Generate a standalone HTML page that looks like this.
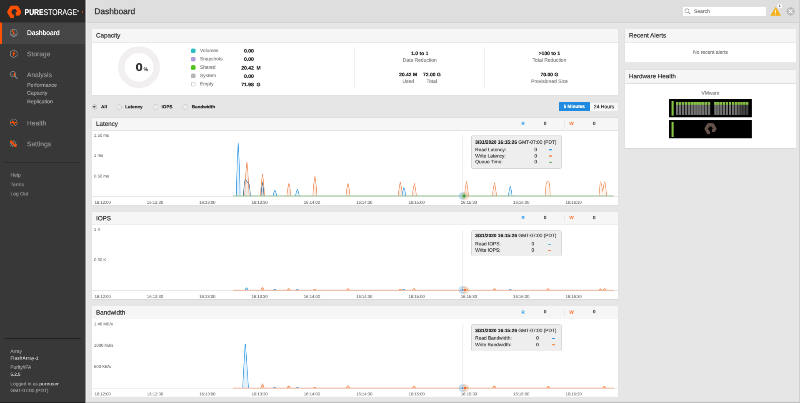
<!DOCTYPE html>
<html lang="en"><head><meta charset="utf-8"><title>Pure Storage - Dashboard</title>
<style>
html,body{margin:0;padding:0;background:#e6e6e6;overflow:hidden;}
body{width:800px;height:403px;position:relative;font-family:"Liberation Sans",sans-serif;}
#stage{position:absolute;left:0;top:0;width:1920px;height:968px;transform:scale(0.4166667);transform-origin:0 0;background:#e6e6e6;overflow:hidden;will-change:transform;}
.t{position:absolute;white-space:nowrap;text-rendering:geometricPrecision;-webkit-text-stroke:0.2px currentColor;text-shadow:0 0 1.2px currentColor;}
.panel{position:absolute;background:#fff;border:1px solid #d4d4d4;box-sizing:border-box;}
.ph{position:absolute;left:0;top:0;right:0;background:#f6f6f6;border-bottom:1px solid #dcdcdc;box-sizing:border-box;}
svg{position:absolute;left:0;top:0;overflow:visible;}
</style></head><body><div id="stage">

<div style="position:absolute;left:0;top:0;width:1920px;height:53px;background:#dedede;border-bottom:2px solid #d3d3d3;"></div>
<div class="t" style="left:226.6px;top:15.3px;font-size:20px;line-height:26px;color:#3f3f3f;font-weight:normal;-webkit-text-stroke:0.45px #3f3f3f;">Dashboard</div>
<div style="position:absolute;left:1639.2px;top:16.3px;width:199.2px;height:21.8px;background:#fff;border-radius:2px;"></div>
<div class="t" style="left:1665.6px;top:19.1px;font-size:12px;line-height:16px;color:#8c8c8c;font-weight:normal;">Search</div>
<svg width="1920" height="60" viewBox="0 0 800 25"><circle cx="687" cy="10.8" r="2.0" fill="none" stroke="#8a8a8a" stroke-width="0.65"/><line x1="688.5" y1="12.3" x2="690.2" y2="14" stroke="#8a8a8a" stroke-width="0.75"/><path d="M775.7 7.6 L780.4 15.3 L771 15.3 Z" fill="#f6b21b" stroke="#f6b21b" stroke-width="0.8" stroke-linejoin="round"/><rect x="775.25" y="9.8" width="0.9" height="3.3" fill="#fff"/><rect x="775.25" y="13.7" width="0.9" height="0.9" fill="#fff"/><circle cx="779.7" cy="6" r="2.4" fill="#fff"/><circle cx="790.6" cy="11.4" r="4.2" fill="#bdbdbd"/><path d="M788.9 9.7 L792.3 13.1 M792.3 9.7 L788.9 13.1" stroke="#fff" stroke-width="0.9" stroke-linecap="round"/></svg>
<div class="t" style="left:1871.3px;top:9.9px;font-size:7px;line-height:9px;color:#555;font-weight:bold;transform:translateX(-50%);-webkit-text-stroke:0.08px currentColor;">1</div>
<div style="position:absolute;left:0;top:0;width:205px;height:968px;background:#383838;"></div><div style="position:absolute;left:205px;top:0;width:4px;height:968px;background:linear-gradient(to right,#9a9a9a 0,#e9e9e9 35%,#ebebeb 70%,rgba(235,235,235,0) 100%);"></div>
<div style="position:absolute;left:0;top:0;width:205px;height:54px;background:#2a2a2a;"></div>
<div style="position:absolute;left:0;top:54px;width:205px;height:52px;background:#454545;"></div>
<div style="position:absolute;left:0;top:54px;width:5px;height:52px;background:#fe5000;"></div>
<svg width="205" height="54" viewBox="0 0 85.4167 22.5"><path d="M13.7 16.45 L11.66 16.45 L9.07 11.95 L11.66 7.46 L16.84 7.46 L19.43 11.95 L18.39 13.75 L15.7 13.75" fill="none" stroke="#fe5000" stroke-width="3.7" stroke-linejoin="round"/><path d="M82.6 10.6 L81.5 12 L82.6 13.4 Z" fill="#fe5000"/></svg>
<div class="t" style="left:59.04px;top:15.32px;font-size:20px;line-height:26px;color:#fff;transform-origin:0 50%;transform:scaleX(0.81);letter-spacing:0.2px;"><b>PURE</b><span style="color:#e8e8e8;font-weight:normal">STORAGE</span><span style="font-size:7px;vertical-align:7px;color:#ccc">&reg;</span></div>
<div class="t" style="left:64.8px;top:69.4px;font-size:16px;line-height:21px;color:#fff;font-weight:normal;">Dashboard</div>
<div class="t" style="left:64.8px;top:119.8px;font-size:16px;line-height:21px;color:#8c8c8c;font-weight:normal;">Storage</div>
<div class="t" style="left:64.8px;top:170.2px;font-size:16px;line-height:21px;color:#8c8c8c;font-weight:normal;">Analysis</div>
<div class="t" style="left:64.8px;top:285.7px;font-size:16px;line-height:21px;color:#8c8c8c;font-weight:normal;">Health</div>
<div class="t" style="left:64.8px;top:335.6px;font-size:16px;line-height:21px;color:#8c8c8c;font-weight:normal;">Settings</div>
<div class="t" style="left:65.0px;top:196.0px;font-size:12.5px;line-height:16px;color:#9c9c9c;font-weight:normal;">Performance</div>
<div class="t" style="left:65.0px;top:215.4px;font-size:12.5px;line-height:16px;color:#9c9c9c;font-weight:normal;">Capacity</div>
<div class="t" style="left:65.0px;top:235.8px;font-size:12.5px;line-height:16px;color:#9c9c9c;font-weight:normal;">Replication</div>
<svg width="24" height="24" viewBox="-12 -12 24 24" style="left:20.880000000000003px;top:67.44px"><circle r="8.6" fill="none" stroke="#878787" stroke-width="1.7"/><path d="M-8.3 1.8 A8.5 8.5 0 0 0 8.3 1.8 Z" fill="#878787" opacity=".5"/><path d="M-3.4 -5.8 L0.7 1.4" stroke="#fe5000" stroke-width="2.9" stroke-linecap="round"/></svg>
<svg width="24" height="24" viewBox="-12 -12 24 24" style="left:20.880000000000003px;top:117.12px"><path d="M0 -9.3 L8 -4.6 L8 4.6 L0 9.3 L-8 4.6 L-8 -4.6 Z" fill="none" stroke="#878787" stroke-width="1.7"/><path d="M1.6 -6 L-2.6 0.9 L0.2 0.9 L-1.4 6 L2.9 -1.1 L0.2 -1.1 Z" fill="#fe5000" stroke="#fe5000" stroke-width="1.2" stroke-linejoin="round"/></svg>
<svg width="24" height="24" viewBox="-12 -12 24 24" style="left:21.119999999999997px;top:168.0px"><circle cx="-1.9" cy="-1.9" r="6.6" fill="none" stroke="#878787" stroke-width="1.7"/><path d="M3.2 3.2 L8.3 8.3" stroke="#878787" stroke-width="2.6" stroke-linecap="round"/><path d="M-4.2 1.6 L-4.2 -2" stroke="#5d7890" stroke-width="2"/><path d="M-1.6 2 L-1.6 -3" stroke="#a05a3a" stroke-width="1.6"/><path d="M1.3 2.4 L1.3 -4.6" stroke="#fe5000" stroke-width="3"/></svg>
<svg width="24" height="24" viewBox="-12 -12 24 24" style="left:20.64px;top:282.24px"><circle r="8.4" fill="none" stroke="#878787" stroke-width="1.4"/><path d="M-8.6 0.3 L-4.2 0.3 L-2 -3.6 L1 4.4 L3.2 0.3 L8.6 0.3" fill="none" stroke="#fe5000" stroke-width="2.6" stroke-linejoin="round"/></svg>
<svg width="24" height="24" viewBox="-12 -12 24 24" style="left:20.4px;top:332.64px"><circle r="6.6" fill="none" stroke="#878787" stroke-width="3.4" stroke-dasharray="2.6 2.58" opacity=".85"/><circle r="4.8" fill="none" stroke="#878787" stroke-width="1.6" opacity=".85"/><path d="M-4.6 -4.6 L4.6 4.6" stroke="#fe5000" stroke-width="4.2" stroke-linecap="butt"/><circle cx="-5" cy="-5" r="3" fill="#fe5000"/><circle cx="5" cy="5" r="3" fill="#fe5000"/></svg>
<div style="position:absolute;left:10.8px;top:389.5px;width:183.6px;height:1.4px;background:#1e1e1e;"></div>
<div class="t" style="left:25.0px;top:412.0px;font-size:12px;line-height:16px;color:#888;font-weight:normal;">Help</div>
<div class="t" style="left:25.0px;top:434.6px;font-size:12px;line-height:16px;color:#888;font-weight:normal;">Terms</div>
<div class="t" style="left:25.0px;top:456.6px;font-size:12px;line-height:16px;color:#888;font-weight:normal;">Log Out</div>
<div style="position:absolute;left:10.8px;top:811.7px;width:183.6px;height:1.4px;background:#1e1e1e;"></div>
<div class="t" style="left:25.0px;top:836.6px;font-size:11.5px;line-height:15px;color:#939393;font-weight:normal;">Array</div>
<div class="t" style="left:25.0px;top:853.4px;font-size:11px;line-height:14px;color:#c4c4c4;font-weight:bold;-webkit-text-stroke:0.08px currentColor;-webkit-text-stroke:0;text-shadow:none;">FlashArray-1</div>
<div class="t" style="left:25.0px;top:875.0px;font-size:11.5px;line-height:15px;color:#939393;font-weight:normal;">Purity//FA</div>
<div class="t" style="left:25.0px;top:892.3px;font-size:11px;line-height:14px;color:#c4c4c4;font-weight:bold;-webkit-text-stroke:0.08px currentColor;-webkit-text-stroke:0;text-shadow:none;">5.2.5</div>
<div class="t" style="left:25.0px;top:914.6px;font-size:11.5px;line-height:15px;color:#939393;font-weight:normal;">Logged in as <b style="color:#c4c4c4;font-size:11px;-webkit-text-stroke:0;text-shadow:none">pureuser</b></div>
<div class="t" style="left:25.0px;top:930.7px;font-size:11.5px;line-height:15px;color:#939393;font-weight:normal;">GMT-07:00 (PDT)</div>
<div class="panel" style="left:220px;top:69px;width:1264px;height:161px;"><div class="ph" style="height:33px"></div></div>
<div class="t" style="left:230.5px;top:76.0px;font-size:15px;line-height:20px;color:#444;font-weight:normal;">Capacity</div>
<svg width="1920" height="968" viewBox="0 0 1920 968"><circle cx="333.6" cy="161.4" r="42.3" fill="none" stroke="#f1efef" stroke-width="15.6"/><line x1="850.8" y1="112.08" x2="850.8" y2="211.2" stroke="#efefef" stroke-width="2"/><line x1="1163.04" y1="112.08" x2="1163.04" y2="211.2" stroke="#efefef" stroke-width="2"/></svg>
<div class="t" style="left:334.1px;top:144.3px;font-size:26px;line-height:34px;color:#333;font-weight:bold;transform:translateX(-50%);-webkit-text-stroke:0.08px currentColor;transform:translateX(-50%) scaleX(1.17);">0</div>
<div class="t" style="left:344.4px;top:157.6px;font-size:12px;line-height:16px;color:#666;font-weight:bold;-webkit-text-stroke:0.08px currentColor;">%</div>
<svg width="1920" height="968" viewBox="0 0 800 403.333"><rect x="191" y="48.50" width="4.6" height="4.6" rx="1.5" fill="#2fbdc6"/></svg>
<div class="t" style="left:480.0px;top:115.1px;font-size:11.5px;line-height:15px;color:#939393;font-weight:normal;">Volumes</div>
<div class="t" style="left:609.1px;top:114.4px;font-size:12px;line-height:16px;color:#333;font-weight:bold;transform:translateX(-100%);-webkit-text-stroke:0.08px currentColor;">0.00</div>
<svg width="1920" height="968" viewBox="0 0 800 403.333"><rect x="191" y="56.85" width="4.6" height="4.6" rx="1.5" fill="#b39ddb"/></svg>
<div class="t" style="left:480.0px;top:135.2px;font-size:11.5px;line-height:15px;color:#939393;font-weight:normal;">Snapshots</div>
<div class="t" style="left:609.1px;top:134.4px;font-size:12px;line-height:16px;color:#333;font-weight:bold;transform:translateX(-100%);-webkit-text-stroke:0.08px currentColor;">0.00</div>
<svg width="1920" height="968" viewBox="0 0 800 403.333"><rect x="191" y="65.20" width="4.6" height="4.6" rx="1.5" fill="#4ec41b"/></svg>
<div class="t" style="left:480.0px;top:155.2px;font-size:11.5px;line-height:15px;color:#939393;font-weight:normal;">Shared</div>
<div class="t" style="left:609.1px;top:154.5px;font-size:12px;line-height:16px;color:#333;font-weight:bold;transform:translateX(-100%);-webkit-text-stroke:0.08px currentColor;">20.42</div>
<div class="t" style="left:615.4px;top:154.5px;font-size:12px;line-height:16px;color:#333;font-weight:bold;-webkit-text-stroke:0.08px currentColor;">M</div>
<svg width="1920" height="968" viewBox="0 0 800 403.333"><rect x="191" y="73.55" width="4.6" height="4.6" rx="1.5" fill="#b4b8bb"/></svg>
<div class="t" style="left:480.0px;top:175.3px;font-size:11.5px;line-height:15px;color:#939393;font-weight:normal;">System</div>
<div class="t" style="left:609.1px;top:174.5px;font-size:12px;line-height:16px;color:#333;font-weight:bold;transform:translateX(-100%);-webkit-text-stroke:0.08px currentColor;">0.00</div>
<svg width="1920" height="968" viewBox="0 0 800 403.333"><rect x="191.35" y="82.25" width="3.8999999999999995" height="3.8999999999999995" rx="1.5" fill="#fff" stroke="#c9c9c9" stroke-width="0.7"/></svg>
<div class="t" style="left:480.0px;top:195.3px;font-size:11.5px;line-height:15px;color:#939393;font-weight:normal;">Empty</div>
<div class="t" style="left:609.1px;top:194.6px;font-size:12px;line-height:16px;color:#333;font-weight:bold;transform:translateX(-100%);-webkit-text-stroke:0.08px currentColor;">71.98</div>
<div class="t" style="left:615.4px;top:194.6px;font-size:12px;line-height:16px;color:#333;font-weight:bold;-webkit-text-stroke:0.08px currentColor;">G</div>
<div class="t" style="left:1007.5px;top:120.4px;font-size:12px;line-height:16px;color:#333;font-weight:bold;transform:translateX(-50%);-webkit-text-stroke:0.08px currentColor;">1.0 to 1</div>
<div class="t" style="left:1007.5px;top:137.2px;font-size:11.8px;line-height:15px;color:#939393;font-weight:normal;transform:translateX(-50%);">Data Reduction</div>
<div class="t" style="left:979.4px;top:171.3px;font-size:12px;line-height:16px;color:#333;font-weight:bold;transform:translateX(-50%);-webkit-text-stroke:0.08px currentColor;">20.42 M</div>
<div class="t" style="left:1036.6px;top:171.3px;font-size:12px;line-height:16px;color:#333;font-weight:bold;transform:translateX(-50%);-webkit-text-stroke:0.08px currentColor;">72.00 G</div>
<div class="t" style="left:979.7px;top:188.1px;font-size:11.8px;line-height:15px;color:#939393;font-weight:normal;transform:translateX(-50%);">Used</div>
<div class="t" style="left:1036.3px;top:188.1px;font-size:11.8px;line-height:15px;color:#939393;font-weight:normal;transform:translateX(-50%);">Total</div>
<div class="t" style="left:1318.6px;top:120.4px;font-size:12px;line-height:16px;color:#333;font-weight:bold;transform:translateX(-50%);-webkit-text-stroke:0.08px currentColor;">&gt;100 to 1</div>
<div class="t" style="left:1318.6px;top:137.2px;font-size:11.8px;line-height:15px;color:#939393;font-weight:normal;transform:translateX(-50%);">Total Reduction</div>
<div class="t" style="left:1318.6px;top:170.8px;font-size:12px;line-height:16px;color:#333;font-weight:bold;transform:translateX(-50%);-webkit-text-stroke:0.08px currentColor;">70.00 G</div>
<div class="t" style="left:1318.6px;top:188.1px;font-size:11.8px;line-height:15px;color:#939393;font-weight:normal;transform:translateX(-50%);">Provisioned Size</div>
<div class="panel" style="left:1499px;top:69px;width:412px;height:82px;"><div class="ph" style="height:33px"></div></div>
<div class="t" style="left:1509.5px;top:76.0px;font-size:15px;line-height:20px;color:#444;font-weight:normal;">Recent Alerts</div>
<div class="t" style="left:1705.2px;top:117.8px;font-size:11.8px;line-height:15px;color:#8c8c8c;font-weight:normal;transform:translateX(-50%);">No recent alerts</div>
<div class="panel" style="left:1499px;top:167px;width:412px;height:190px;"><div class="ph" style="height:33px"></div></div>
<div class="t" style="left:1509.5px;top:174.0px;font-size:15px;line-height:20px;color:#444;font-weight:normal;">Hardware Health</div>
<div class="t" style="left:1705.2px;top:215.5px;font-size:11.8px;line-height:15px;color:#8c8c8c;font-weight:normal;transform:translateX(-50%);">VMware</div>
<svg width="1920" height="968" viewBox="0 0 800 403.333"><rect x="669.1" y="98.9" width="82.6" height="18.4" fill="#000"/><rect x="669.1" y="120" width="82.6" height="18.4" fill="#000"/><rect x="671.5" y="100.9" width="2.1" height="14.7" fill="#86c440"/><rect x="671.5" y="121.7" width="2.1" height="15.3" fill="#86c440"/><rect x="676.10" y="102" width="2.34" height="13" fill="#727272"/><rect x="676.10" y="102" width="2.34" height="2.7" fill="#86c440"/><rect x="678.99" y="102" width="2.34" height="13" fill="#727272"/><rect x="678.99" y="102" width="2.34" height="2.7" fill="#86c440"/><rect x="681.88" y="102" width="2.34" height="13" fill="#727272"/><rect x="681.88" y="102" width="2.34" height="2.7" fill="#86c440"/><rect x="684.77" y="102" width="2.34" height="13" fill="#727272"/><rect x="684.77" y="102" width="2.34" height="2.7" fill="#86c440"/><rect x="687.67" y="102" width="2.34" height="13" fill="#727272"/><rect x="687.67" y="102" width="2.34" height="2.7" fill="#86c440"/><rect x="690.56" y="102" width="2.34" height="13" fill="#727272"/><rect x="690.56" y="102" width="2.34" height="2.7" fill="#86c440"/><rect x="693.45" y="102" width="2.34" height="13" fill="#727272"/><rect x="693.45" y="102" width="2.34" height="2.7" fill="#86c440"/><rect x="696.34" y="102" width="2.34" height="13" fill="#727272"/><rect x="696.34" y="102" width="2.34" height="2.7" fill="#86c440"/><rect x="699.23" y="102" width="2.34" height="13" fill="#727272"/><rect x="699.23" y="102" width="2.34" height="2.7" fill="#86c440"/><rect x="702.12" y="102" width="2.34" height="13" fill="#727272"/><rect x="702.12" y="102" width="2.34" height="2.7" fill="#86c440"/><rect x="705.02" y="102" width="2.34" height="13" fill="#727272"/><rect x="705.02" y="102" width="2.34" height="2.7" fill="#86c440"/><rect x="707.91" y="102" width="2.34" height="13" fill="#727272"/><rect x="707.91" y="102" width="2.34" height="2.7" fill="#86c440"/><rect x="714.30" y="102" width="2.34" height="13" fill="#727272"/><rect x="714.30" y="102" width="2.34" height="2.7" fill="#86c440"/><rect x="717.19" y="102" width="2.34" height="13" fill="#727272"/><rect x="717.19" y="102" width="2.34" height="2.7" fill="#86c440"/><rect x="720.08" y="102" width="2.34" height="13" fill="#727272"/><rect x="720.08" y="102" width="2.34" height="2.7" fill="#86c440"/><rect x="722.97" y="102" width="2.34" height="13" fill="#727272"/><rect x="722.97" y="102" width="2.34" height="2.7" fill="#86c440"/><rect x="725.87" y="102" width="2.34" height="13" fill="#727272"/><rect x="725.87" y="102" width="2.34" height="2.7" fill="#86c440"/><rect x="728.76" y="102" width="2.34" height="13" fill="#727272"/><rect x="728.76" y="102" width="2.34" height="2.7" fill="#86c440"/><rect x="731.65" y="102" width="2.34" height="13" fill="#727272"/><rect x="731.65" y="102" width="2.34" height="2.7" fill="#86c440"/><rect x="734.54" y="102" width="2.34" height="13" fill="#727272"/><rect x="734.54" y="102" width="2.34" height="2.7" fill="#86c440"/><rect x="737.43" y="102" width="2.34" height="13" fill="#5c5c5c"/><rect x="737.43" y="102" width="2.34" height="2.7" fill="#86c440"/><rect x="740.32" y="102" width="2.34" height="13" fill="#4a4a4a"/><rect x="740.32" y="102" width="2.34" height="2.7" fill="#86c440"/><rect x="743.22" y="102" width="2.34" height="13" fill="#444"/><rect x="743.22" y="102" width="2.34" height="2.7" fill="#86c440"/><rect x="746.11" y="102" width="2.34" height="13" fill="#404040"/><rect x="746.11" y="102" width="2.34" height="2.7" fill="#86c440"/><path d="M709.9 132.64 L708.29 132.64 L706.07 128.8 L708.29 124.96 L712.72 124.96 L714.93 128.8 L714.05 130.33 L711.7 130.33" fill="none" stroke="#66514a" stroke-width="3.3" stroke-linejoin="round"/></svg>
<div style="position:absolute;left:220.8px;top:250.3px;width:12.5px;height:12.5px;border:1.3px solid #bcbcbc;border-radius:50%;background:#d9d9d9;box-sizing:border-box;"><div style="position:absolute;left:2.6px;top:2.6px;width:4.6px;height:4.6px;border-radius:50%;background:#3a3a3a"></div></div>
<div class="t" style="left:242.6px;top:249.6px;font-size:11px;line-height:14px;color:#333;font-weight:bold;-webkit-text-stroke:0.08px currentColor;">All</div>
<div style="position:absolute;left:279.6px;top:250.3px;width:12.5px;height:12.5px;border:1.3px solid #bcbcbc;border-radius:50%;background:#ececec;box-sizing:border-box;"></div>
<div class="t" style="left:300.6px;top:249.6px;font-size:11px;line-height:14px;color:#333;font-weight:bold;-webkit-text-stroke:0.08px currentColor;">Latency</div>
<div style="position:absolute;left:367.0px;top:250.3px;width:12.5px;height:12.5px;border:1.3px solid #bcbcbc;border-radius:50%;background:#ececec;box-sizing:border-box;"></div>
<div class="t" style="left:387.6px;top:249.6px;font-size:11px;line-height:14px;color:#333;font-weight:bold;-webkit-text-stroke:0.08px currentColor;">IOPS</div>
<div style="position:absolute;left:438.0px;top:250.3px;width:12.5px;height:12.5px;border:1.3px solid #bcbcbc;border-radius:50%;background:#ececec;box-sizing:border-box;"></div>
<div class="t" style="left:460.2px;top:249.6px;font-size:11px;line-height:14px;color:#333;font-weight:bold;-webkit-text-stroke:0.08px currentColor;">Bandwidth</div>
<div style="position:absolute;left:1341.0px;top:244.8px;width:74.8px;height:22.2px;background:#1f8ae0;border-radius:3px 0 0 3px;"></div>
<div style="position:absolute;left:1415.8px;top:244.8px;width:67.9px;height:22.2px;background:#f8f8f8;border-radius:0 3px 3px 0;border:1px solid #dcdcdc;border-left:none;box-sizing:border-box;"></div>
<div class="t" style="left:1378.3px;top:248.8px;font-size:11px;line-height:14px;color:#fff;font-weight:bold;transform:translateX(-50%);-webkit-text-stroke:0.08px currentColor;">5 Minutes</div>
<div class="t" style="left:1449.6px;top:247.8px;font-size:12px;line-height:16px;color:#444;font-weight:normal;transform:translateX(-50%);">24 Hours</div>
<div class="panel" style="left:220px;top:281.5px;width:1264px;height:211.5px;"><div class="ph" style="height:31px"></div></div>
<div class="t" style="left:230.5px;top:287.5px;font-size:15px;line-height:20px;color:#444;font-weight:normal;">Latency</div>
<div class="t" style="left:1255.2px;top:290.0px;font-size:11px;line-height:14px;color:#46a8ee;font-weight:bold;transform:translateX(-50%);-webkit-text-stroke:0.08px currentColor;-webkit-text-stroke:0;">R</div>
<div class="t" style="left:1308.5px;top:289.5px;font-size:11.5px;line-height:15px;color:#5a5a5a;font-weight:bold;transform:translateX(-50%);-webkit-text-stroke:0.08px currentColor;-webkit-text-stroke:0;">0</div>
<div style="position:absolute;left:1354.3px;top:288.4px;width:1.0px;height:17.3px;background:#e4e4e4;"></div>
<div class="t" style="left:1371.8px;top:290.0px;font-size:11px;line-height:14px;color:#f2814a;font-weight:bold;transform:translateX(-50%);-webkit-text-stroke:0.08px currentColor;-webkit-text-stroke:0;">W</div>
<div class="t" style="left:1426.3px;top:289.5px;font-size:11.5px;line-height:15px;color:#5a5a5a;font-weight:bold;transform:translateX(-50%);-webkit-text-stroke:0.08px currentColor;-webkit-text-stroke:0;">0</div>
<div class="t" style="left:225.8px;top:318.7px;font-size:10px;line-height:13px;color:#858585;font-weight:normal;-webkit-text-stroke:0;">1.50 ms</div>
<div class="t" style="left:225.8px;top:367.4px;font-size:10px;line-height:13px;color:#858585;font-weight:normal;-webkit-text-stroke:0;">1 ms</div>
<div class="t" style="left:225.8px;top:416.6px;font-size:10px;line-height:13px;color:#858585;font-weight:normal;-webkit-text-stroke:0;">0.50 ms</div>
<div class="t" style="left:227.0px;top:479.5px;font-size:10px;line-height:13px;color:#858585;font-weight:normal;-webkit-text-stroke:0;">16:12:00</div>
<div class="t" style="left:352.6px;top:479.5px;font-size:10px;line-height:13px;color:#858585;font-weight:normal;-webkit-text-stroke:0;">16:12:30</div>
<div class="t" style="left:478.2px;top:479.5px;font-size:10px;line-height:13px;color:#858585;font-weight:normal;-webkit-text-stroke:0;">16:13:00</div>
<div class="t" style="left:603.7px;top:479.5px;font-size:10px;line-height:13px;color:#858585;font-weight:normal;-webkit-text-stroke:0;">16:13:30</div>
<div class="t" style="left:729.3px;top:479.5px;font-size:10px;line-height:13px;color:#858585;font-weight:normal;-webkit-text-stroke:0;">16:14:00</div>
<div class="t" style="left:854.9px;top:479.5px;font-size:10px;line-height:13px;color:#858585;font-weight:normal;-webkit-text-stroke:0;">16:14:30</div>
<div class="t" style="left:980.4px;top:479.5px;font-size:10px;line-height:13px;color:#858585;font-weight:normal;-webkit-text-stroke:0;">16:15:00</div>
<div class="t" style="left:1106.0px;top:479.5px;font-size:10px;line-height:13px;color:#858585;font-weight:normal;-webkit-text-stroke:0;">16:15:30</div>
<div class="t" style="left:1231.6px;top:479.5px;font-size:10px;line-height:13px;color:#858585;font-weight:normal;-webkit-text-stroke:0;">16:16:00</div>
<div class="t" style="left:1357.2px;top:479.5px;font-size:10px;line-height:13px;color:#858585;font-weight:normal;-webkit-text-stroke:0;">16:16:30</div>
<svg width="1920" height="968" viewBox="0 0 800 403.333"><line x1="91.9" y1="196.64999999999998" x2="618" y2="196.64999999999998" stroke="#dedede" stroke-width="0.5"/><line x1="462.9" y1="134.90" x2="462.9" y2="196.2" stroke="#cfcfcf" stroke-width="0.45"/><path d="M236.30 196.00 Q236.95 162.08 238.20 143.00 Q239.45 162.08 240.10 196.00" fill="#3a9fea" fill-opacity="0.16" stroke="#3a9fea" stroke-width="0.62" stroke-linejoin="round"/><path d="M244.70 196.00 Q245.45 174.11 246.90 161.80 Q248.35 174.11 249.10 196.00" fill="#f2915d" fill-opacity="0.16" stroke="#f2915d" stroke-width="0.62" stroke-linejoin="round"/><path d="M243.4 196.0 C243.9 188 244.4 179.6 245.3 179.6 C246.3 179.6 246.6 182.6 248.4 183 C249.6 183.4 249.9 190 250.5 196.0" fill="#3a9fea" fill-opacity="0.04" stroke="#46779f" stroke-width="0.62"/><path d="M260.50 196.00 Q261.18 181.92 262.50 174.00 Q263.82 181.92 264.50 196.00" fill="#f2915d" fill-opacity="0.16" stroke="#f2915d" stroke-width="0.62" stroke-linejoin="round"/><path d="M261.00 196.00 Q261.51 187.42 262.50 182.60 Q263.49 187.42 264.00 196.00" fill="#4a7aa5" fill-opacity="0.16" stroke="#4a7aa5" stroke-width="0.62" stroke-linejoin="round"/><path d="M273.10 196.00 Q273.71 192.29 274.90 190.20 Q276.09 192.29 276.70 196.00" fill="#3a9fea" fill-opacity="0.16" stroke="#3a9fea" stroke-width="0.62" stroke-linejoin="round"/><path d="M286.90 196.00 Q287.58 187.87 288.90 183.30 Q290.22 187.87 290.90 196.00" fill="#f2915d" fill-opacity="0.16" stroke="#f2915d" stroke-width="0.62" stroke-linejoin="round"/><path d="M295.50 196.00 Q296.15 191.78 297.40 189.40 Q298.65 191.78 299.30 196.00" fill="#3a9fea" fill-opacity="0.16" stroke="#3a9fea" stroke-width="0.62" stroke-linejoin="round"/><path d="M312.90 196.00 Q313.58 183.20 314.90 176.00 Q316.22 183.20 316.90 196.00" fill="#f2915d" fill-opacity="0.16" stroke="#f2915d" stroke-width="0.62" stroke-linejoin="round"/><path d="M346.00 196.00 Q346.68 187.87 348.00 183.30 Q349.32 187.87 350.00 196.00" fill="#f2915d" fill-opacity="0.16" stroke="#f2915d" stroke-width="0.62" stroke-linejoin="round"/><path d="M398.30 196.00 Q398.98 187.04 400.30 182.00 Q401.62 187.04 402.30 196.00" fill="#f2915d" fill-opacity="0.16" stroke="#f2915d" stroke-width="0.62" stroke-linejoin="round"/><path d="M402.00 196.00 Q402.65 190.62 403.90 187.60 Q405.15 190.62 405.80 196.00" fill="#3a9fea" fill-opacity="0.16" stroke="#3a9fea" stroke-width="0.62" stroke-linejoin="round"/><path d="M412.40 196.00 Q413.08 188.00 414.40 183.50 Q415.72 188.00 416.40 196.00" fill="#f2915d" fill-opacity="0.16" stroke="#f2915d" stroke-width="0.62" stroke-linejoin="round"/><path d="M464.50 196.00 Q465.18 186.85 466.50 181.70 Q467.82 186.85 468.50 196.00" fill="#f2915d" fill-opacity="0.16" stroke="#f2915d" stroke-width="0.62" stroke-linejoin="round"/><path d="M492.50 196.00 Q493.18 187.55 494.50 182.80 Q495.82 187.55 496.50 196.00" fill="#f2915d" fill-opacity="0.16" stroke="#f2915d" stroke-width="0.62" stroke-linejoin="round"/><path d="M508.45 196.00 Q509.06 189.73 510.25 186.20 Q511.44 189.73 512.05 196.00" fill="#3a9fea" fill-opacity="0.16" stroke="#3a9fea" stroke-width="0.62" stroke-linejoin="round"/><path d="M545.2 196.0 C545.6 188 546 181.7 547.2 181.7 L548.4 181.7 C549.6 181.7 549.9 188 550.3 196.0" fill="#f2915d" fill-opacity="0.1" stroke="#f2915d" stroke-width="0.62"/><path d="M599 196.0 C599.5 190 599.9 181.7 600.6 181.7 C601.4 181.7 601.9 188 602.7 191 C603.5 188 604 181.7 604.8 181.7 C605.5 181.7 606 190 606.6 196.0" fill="#f2915d" fill-opacity="0.1" stroke="#f2915d" stroke-width="0.62"/><line x1="233" y1="196.0" x2="613.6" y2="196.0" stroke="#97c597" stroke-width="0.9"/><circle cx="462.4" cy="195.95" r="3.9" fill="#5fb0ee" fill-opacity="0.38"/><circle cx="465.1" cy="195.95" r="3.9" fill="#f4a070" fill-opacity="0.34"/><circle cx="463.8" cy="195.95" r="2.8" fill="#8cc88c" fill-opacity="0.7"/><circle cx="463.8" cy="195.95" r="2.5" fill="none" stroke="#c9b9a9" stroke-width="0.35" stroke-dasharray="0.5 0.5"/><circle cx="464.2" cy="195.95" r="1.15" fill="#2f9a2f"/></svg>
<div style="position:absolute;left:1130.9px;top:323.8px;width:217.0px;height:80.9px;background:#eee;border:1px solid #d2d2d2;border-radius:4px;box-sizing:border-box;"></div>
<div class="t" style="left:1140.5px;top:334.5px;font-size:11.5px;line-height:15px;color:#555;font-weight:normal;"><b style="color:#333;-webkit-text-stroke:0">3/31/2020 16:15:26</b> GMT-07:00 (PDT)</div>
<div class="t" style="left:1140.5px;top:352.5px;font-size:11.5px;line-height:15px;color:#555;font-weight:normal;">Read Latency:</div>
<div class="t" style="left:1285.7px;top:352.5px;font-size:11.5px;line-height:15px;color:#555;font-weight:normal;transform:translateX(-50%);">0</div>
<div style="position:absolute;left:1316.6px;top:358.3px;width:8.2px;height:2.8px;background:#3a9fea;"></div>
<div class="t" style="left:1140.5px;top:367.6px;font-size:11.5px;line-height:15px;color:#555;font-weight:normal;">Write Latency:</div>
<div class="t" style="left:1285.7px;top:367.6px;font-size:11.5px;line-height:15px;color:#555;font-weight:normal;transform:translateX(-50%);">0</div>
<div style="position:absolute;left:1316.6px;top:373.4px;width:8.2px;height:2.8px;background:#f2915d;"></div>
<div class="t" style="left:1140.5px;top:382.0px;font-size:11.5px;line-height:15px;color:#555;font-weight:normal;">Queue Time:</div>
<div class="t" style="left:1285.7px;top:382.0px;font-size:11.5px;line-height:15px;color:#555;font-weight:normal;transform:translateX(-50%);">0</div>
<div style="position:absolute;left:1316.6px;top:387.8px;width:8.2px;height:2.8px;background:#6cb36c;"></div>
<div class="panel" style="left:220px;top:507.8px;width:1264px;height:211.2px;"><div class="ph" style="height:31px"></div></div>
<div class="t" style="left:230.5px;top:514.9px;font-size:15px;line-height:20px;color:#444;font-weight:normal;">IOPS</div>
<div class="t" style="left:1255.2px;top:516.3px;font-size:11px;line-height:14px;color:#46a8ee;font-weight:bold;transform:translateX(-50%);-webkit-text-stroke:0.08px currentColor;-webkit-text-stroke:0;">R</div>
<div class="t" style="left:1308.5px;top:515.8px;font-size:11.5px;line-height:15px;color:#5a5a5a;font-weight:bold;transform:translateX(-50%);-webkit-text-stroke:0.08px currentColor;-webkit-text-stroke:0;">0</div>
<div style="position:absolute;left:1354.3px;top:514.7px;width:1.0px;height:17.3px;background:#e4e4e4;"></div>
<div class="t" style="left:1371.8px;top:516.3px;font-size:11px;line-height:14px;color:#f2814a;font-weight:bold;transform:translateX(-50%);-webkit-text-stroke:0.08px currentColor;-webkit-text-stroke:0;">W</div>
<div class="t" style="left:1426.3px;top:515.8px;font-size:11.5px;line-height:15px;color:#5a5a5a;font-weight:bold;transform:translateX(-50%);-webkit-text-stroke:0.08px currentColor;-webkit-text-stroke:0;">0</div>
<div class="t" style="left:225.8px;top:545.0px;font-size:10px;line-height:13px;color:#858585;font-weight:normal;-webkit-text-stroke:0;">1 K</div>
<div class="t" style="left:225.8px;top:617.7px;font-size:10px;line-height:13px;color:#858585;font-weight:normal;-webkit-text-stroke:0;">0.50 K</div>
<div class="t" style="left:227.0px;top:705.8px;font-size:10px;line-height:13px;color:#858585;font-weight:normal;-webkit-text-stroke:0;">16:12:00</div>
<div class="t" style="left:352.6px;top:705.8px;font-size:10px;line-height:13px;color:#858585;font-weight:normal;-webkit-text-stroke:0;">16:12:30</div>
<div class="t" style="left:478.2px;top:705.8px;font-size:10px;line-height:13px;color:#858585;font-weight:normal;-webkit-text-stroke:0;">16:13:00</div>
<div class="t" style="left:603.7px;top:705.8px;font-size:10px;line-height:13px;color:#858585;font-weight:normal;-webkit-text-stroke:0;">16:13:30</div>
<div class="t" style="left:729.3px;top:705.8px;font-size:10px;line-height:13px;color:#858585;font-weight:normal;-webkit-text-stroke:0;">16:14:00</div>
<div class="t" style="left:854.9px;top:705.8px;font-size:10px;line-height:13px;color:#858585;font-weight:normal;-webkit-text-stroke:0;">16:14:30</div>
<div class="t" style="left:980.4px;top:705.8px;font-size:10px;line-height:13px;color:#858585;font-weight:normal;-webkit-text-stroke:0;">16:15:00</div>
<div class="t" style="left:1106.0px;top:705.8px;font-size:10px;line-height:13px;color:#858585;font-weight:normal;-webkit-text-stroke:0;">16:15:30</div>
<div class="t" style="left:1231.6px;top:705.8px;font-size:10px;line-height:13px;color:#858585;font-weight:normal;-webkit-text-stroke:0;">16:16:00</div>
<div class="t" style="left:1357.2px;top:705.8px;font-size:10px;line-height:13px;color:#858585;font-weight:normal;-webkit-text-stroke:0;">16:16:30</div>
<svg width="1920" height="968" viewBox="0 0 800 403.333"><line x1="91.9" y1="290.65" x2="618" y2="290.65" stroke="#dedede" stroke-width="0.5"/><line x1="462.9" y1="230.25" x2="462.9" y2="290.2" stroke="#cfcfcf" stroke-width="0.45"/><path d="M245.00 290.00 Q245.54 288.53 246.60 287.70 Q247.66 288.53 248.20 290.00" fill="#3a9fea" fill-opacity="0.5" stroke="#3a9fea" stroke-width="0.55" stroke-linejoin="round"/><path d="M273.20 290.00 Q273.74 289.36 274.80 289.00 Q275.86 289.36 276.40 290.00" fill="#3a9fea" fill-opacity="0.5" stroke="#3a9fea" stroke-width="0.55" stroke-linejoin="round"/><path d="M295.80 290.00 Q296.34 289.55 297.40 289.30 Q298.46 289.55 299.00 290.00" fill="#3a9fea" fill-opacity="0.5" stroke="#3a9fea" stroke-width="0.55" stroke-linejoin="round"/><path d="M402.30 290.00 Q402.84 289.49 403.90 289.20 Q404.96 289.49 405.50 290.00" fill="#3a9fea" fill-opacity="0.5" stroke="#3a9fea" stroke-width="0.55" stroke-linejoin="round"/><path d="M508.60 290.00 Q509.14 289.55 510.20 289.30 Q511.26 289.55 511.80 290.00" fill="#3a9fea" fill-opacity="0.5" stroke="#3a9fea" stroke-width="0.55" stroke-linejoin="round"/><line x1="233" y1="290.2" x2="613.8" y2="290.2" stroke="#f2ae8c" stroke-width="0.8"/><path d="M260.90 290.00 Q261.44 288.34 262.50 287.40 Q263.56 288.34 264.10 290.00" fill="#f2915d" fill-opacity="0.5" stroke="#f2915d" stroke-width="0.55" stroke-linejoin="round"/><path d="M287.20 290.00 Q287.74 289.04 288.80 288.50 Q289.86 289.04 290.40 290.00" fill="#f2915d" fill-opacity="0.5" stroke="#f2915d" stroke-width="0.55" stroke-linejoin="round"/><path d="M313.10 290.00 Q313.64 289.42 314.70 289.10 Q315.76 289.42 316.30 290.00" fill="#f2915d" fill-opacity="0.5" stroke="#f2915d" stroke-width="0.55" stroke-linejoin="round"/><path d="M346.40 290.00 Q346.94 289.04 348.00 288.50 Q349.06 289.04 349.60 290.00" fill="#f2915d" fill-opacity="0.5" stroke="#f2915d" stroke-width="0.55" stroke-linejoin="round"/><path d="M398.70 290.00 Q399.24 289.36 400.30 289.00 Q401.36 289.36 401.90 290.00" fill="#f2915d" fill-opacity="0.5" stroke="#f2915d" stroke-width="0.55" stroke-linejoin="round"/><path d="M412.40 290.00 Q412.94 289.04 414.00 288.50 Q415.06 289.04 415.60 290.00" fill="#f2915d" fill-opacity="0.5" stroke="#f2915d" stroke-width="0.55" stroke-linejoin="round"/><path d="M464.90 290.00 Q465.44 289.23 466.50 288.80 Q467.56 289.23 468.10 290.00" fill="#f2915d" fill-opacity="0.5" stroke="#f2915d" stroke-width="0.55" stroke-linejoin="round"/><path d="M493.00 290.00 Q493.54 289.04 494.60 288.50 Q495.66 289.04 496.20 290.00" fill="#f2915d" fill-opacity="0.5" stroke="#f2915d" stroke-width="0.55" stroke-linejoin="round"/><path d="M546.40 290.00 Q546.94 289.04 548.00 288.50 Q549.06 289.04 549.60 290.00" fill="#f2915d" fill-opacity="0.5" stroke="#f2915d" stroke-width="0.55" stroke-linejoin="round"/><path d="M599.00 290.00 Q599.54 289.17 600.60 288.70 Q601.66 289.17 602.20 290.00" fill="#f2915d" fill-opacity="0.5" stroke="#f2915d" stroke-width="0.55" stroke-linejoin="round"/><path d="M603.20 290.00 Q603.74 289.04 604.80 288.50 Q605.86 289.04 606.40 290.00" fill="#f2915d" fill-opacity="0.5" stroke="#f2915d" stroke-width="0.55" stroke-linejoin="round"/><circle cx="462.4" cy="289.95" r="3.9" fill="#5fb0ee" fill-opacity="0.38"/><circle cx="465.1" cy="289.95" r="3.9" fill="#f4a070" fill-opacity="0.34"/><circle cx="463.9" cy="289.95" r="2.6" fill="#f3e6dc" fill-opacity="0.7" stroke="#bdbdbd" stroke-width="0.35"/><circle cx="462.7" cy="289.95" r="0.9" fill="#2f8fe0"/><circle cx="464.9" cy="289.95" r="1.3" fill="#f26a1e"/></svg>
<div style="position:absolute;left:1130.9px;top:552.6px;width:217.0px;height:62.3px;background:#eee;border:1px solid #d2d2d2;border-radius:4px;box-sizing:border-box;"></div>
<div class="t" style="left:1140.5px;top:559.4px;font-size:11.5px;line-height:15px;color:#555;font-weight:normal;"><b style="color:#333;-webkit-text-stroke:0">3/31/2020 16:15:26</b> GMT-07:00 (PDT)</div>
<div class="t" style="left:1140.5px;top:578.7px;font-size:11.5px;line-height:15px;color:#555;font-weight:normal;">Read IOPS:</div>
<div class="t" style="left:1278.7px;top:578.7px;font-size:11.5px;line-height:15px;color:#555;font-weight:normal;transform:translateX(-50%);">0</div>
<div style="position:absolute;left:1315.2px;top:584.5px;width:8.2px;height:2.8px;background:#3a9fea;"></div>
<div class="t" style="left:1140.5px;top:594.2px;font-size:11.5px;line-height:15px;color:#555;font-weight:normal;">Write IOPS:</div>
<div class="t" style="left:1278.7px;top:594.2px;font-size:11.5px;line-height:15px;color:#555;font-weight:normal;transform:translateX(-50%);">0</div>
<div style="position:absolute;left:1315.2px;top:600.0px;width:8.2px;height:2.8px;background:#f2915d;"></div>
<div class="panel" style="left:220px;top:734px;width:1264px;height:219px;"><div class="ph" style="height:31px"></div></div>
<div class="t" style="left:230.5px;top:741.1px;font-size:15px;line-height:20px;color:#444;font-weight:normal;">Bandwidth</div>
<div class="t" style="left:1255.2px;top:742.5px;font-size:11px;line-height:14px;color:#46a8ee;font-weight:bold;transform:translateX(-50%);-webkit-text-stroke:0.08px currentColor;-webkit-text-stroke:0;">R</div>
<div class="t" style="left:1308.5px;top:742.0px;font-size:11.5px;line-height:15px;color:#5a5a5a;font-weight:bold;transform:translateX(-50%);-webkit-text-stroke:0.08px currentColor;-webkit-text-stroke:0;">0</div>
<div style="position:absolute;left:1354.3px;top:740.9px;width:1.0px;height:17.3px;background:#e4e4e4;"></div>
<div class="t" style="left:1371.8px;top:742.5px;font-size:11px;line-height:14px;color:#f2814a;font-weight:bold;transform:translateX(-50%);-webkit-text-stroke:0.08px currentColor;-webkit-text-stroke:0;">W</div>
<div class="t" style="left:1426.3px;top:742.0px;font-size:11.5px;line-height:15px;color:#5a5a5a;font-weight:bold;transform:translateX(-50%);-webkit-text-stroke:0.08px currentColor;-webkit-text-stroke:0;">0</div>
<div class="t" style="left:225.8px;top:771.6px;font-size:10px;line-height:13px;color:#858585;font-weight:normal;-webkit-text-stroke:0;">1.46 MB/s</div>
<div class="t" style="left:225.8px;top:822.5px;font-size:10px;line-height:13px;color:#858585;font-weight:normal;-webkit-text-stroke:0;">1000 KB/s</div>
<div class="t" style="left:225.8px;top:873.8px;font-size:10px;line-height:13px;color:#858585;font-weight:normal;-webkit-text-stroke:0;">500 KB/s</div>
<div class="t" style="left:227.0px;top:939.6px;font-size:10px;line-height:13px;color:#858585;font-weight:normal;-webkit-text-stroke:0;">16:12:00</div>
<div class="t" style="left:352.6px;top:939.6px;font-size:10px;line-height:13px;color:#858585;font-weight:normal;-webkit-text-stroke:0;">16:12:30</div>
<div class="t" style="left:478.2px;top:939.6px;font-size:10px;line-height:13px;color:#858585;font-weight:normal;-webkit-text-stroke:0;">16:13:00</div>
<div class="t" style="left:603.7px;top:939.6px;font-size:10px;line-height:13px;color:#858585;font-weight:normal;-webkit-text-stroke:0;">16:13:30</div>
<div class="t" style="left:729.3px;top:939.6px;font-size:10px;line-height:13px;color:#858585;font-weight:normal;-webkit-text-stroke:0;">16:14:00</div>
<div class="t" style="left:854.9px;top:939.6px;font-size:10px;line-height:13px;color:#858585;font-weight:normal;-webkit-text-stroke:0;">16:14:30</div>
<div class="t" style="left:980.4px;top:939.6px;font-size:10px;line-height:13px;color:#858585;font-weight:normal;-webkit-text-stroke:0;">16:15:00</div>
<div class="t" style="left:1106.0px;top:939.6px;font-size:10px;line-height:13px;color:#858585;font-weight:normal;-webkit-text-stroke:0;">16:15:30</div>
<div class="t" style="left:1231.6px;top:939.6px;font-size:10px;line-height:13px;color:#858585;font-weight:normal;-webkit-text-stroke:0;">16:16:00</div>
<div class="t" style="left:1357.2px;top:939.6px;font-size:10px;line-height:13px;color:#858585;font-weight:normal;-webkit-text-stroke:0;">16:16:30</div>
<svg width="1920" height="968" viewBox="0 0 800 403.333"><line x1="91.9" y1="388.75" x2="618" y2="388.75" stroke="#dedede" stroke-width="0.5"/><line x1="462.9" y1="324.30" x2="462.9" y2="388.3" stroke="#cfcfcf" stroke-width="0.45"/><path d="M242.7 387.9 L245.0 345.5 Q245.3 342.2 245.6 345.5 L248.5 387.9" fill="#3a9fea" fill-opacity="0.14" stroke="#3a9fea" stroke-width="0.62" stroke-linejoin="round"/><path d="M273.00 387.90 Q273.54 387.32 274.60 387.00 Q275.66 387.32 276.20 387.90" fill="#3a9fea" fill-opacity="0.5" stroke="#3a9fea" stroke-width="0.55" stroke-linejoin="round"/><path d="M295.80 387.90 Q296.34 387.52 297.40 387.30 Q298.46 387.52 299.00 387.90" fill="#3a9fea" fill-opacity="0.5" stroke="#3a9fea" stroke-width="0.55" stroke-linejoin="round"/><line x1="233" y1="388.09999999999997" x2="613.8" y2="388.09999999999997" stroke="#f2ae8c" stroke-width="0.8"/><path d="M260.80 387.90 Q261.38 385.21 262.50 383.70 Q263.62 385.21 264.20 387.90" fill="#f2915d" fill-opacity="0.5" stroke="#f2915d" stroke-width="0.55" stroke-linejoin="round"/><path d="M287.00 387.90 Q287.58 386.62 288.70 385.90 Q289.82 386.62 290.40 387.90" fill="#f2915d" fill-opacity="0.5" stroke="#f2915d" stroke-width="0.55" stroke-linejoin="round"/><path d="M313.00 387.90 Q313.58 387.45 314.70 387.20 Q315.82 387.45 316.40 387.90" fill="#f2915d" fill-opacity="0.5" stroke="#f2915d" stroke-width="0.55" stroke-linejoin="round"/><path d="M346.30 387.90 Q346.88 386.30 348.00 385.40 Q349.12 386.30 349.70 387.90" fill="#f2915d" fill-opacity="0.5" stroke="#f2915d" stroke-width="0.55" stroke-linejoin="round"/><path d="M412.30 387.90 Q412.88 386.75 414.00 386.10 Q415.12 386.75 415.70 387.90" fill="#f2915d" fill-opacity="0.5" stroke="#f2915d" stroke-width="0.55" stroke-linejoin="round"/><path d="M464.80 387.90 Q465.38 387.26 466.50 386.90 Q467.62 387.26 468.20 387.90" fill="#f2915d" fill-opacity="0.5" stroke="#f2915d" stroke-width="0.55" stroke-linejoin="round"/><path d="M492.60 387.90 Q493.18 386.62 494.30 385.90 Q495.42 386.62 496.00 387.90" fill="#f2915d" fill-opacity="0.5" stroke="#f2915d" stroke-width="0.55" stroke-linejoin="round"/><path d="M546.60 387.90 Q547.18 386.75 548.30 386.10 Q549.42 386.75 550.00 387.90" fill="#f2915d" fill-opacity="0.5" stroke="#f2915d" stroke-width="0.55" stroke-linejoin="round"/><path d="M602.60 387.90 Q603.18 386.75 604.30 386.10 Q605.42 386.75 606.00 387.90" fill="#f2915d" fill-opacity="0.5" stroke="#f2915d" stroke-width="0.55" stroke-linejoin="round"/><circle cx="462.4" cy="388.05" r="3.9" fill="#5fb0ee" fill-opacity="0.38"/><circle cx="465.1" cy="388.05" r="3.9" fill="#f4a070" fill-opacity="0.34"/><circle cx="463.9" cy="388.05" r="2.6" fill="#f3e6dc" fill-opacity="0.7" stroke="#bdbdbd" stroke-width="0.35"/><circle cx="462.7" cy="388.05" r="0.9" fill="#2f8fe0"/><circle cx="464.9" cy="388.05" r="1.3" fill="#f26a1e"/></svg>
<div style="position:absolute;left:1130.9px;top:778.3px;width:217.0px;height:64.8px;background:#eee;border:1px solid #d2d2d2;border-radius:4px;box-sizing:border-box;"></div>
<div class="t" style="left:1140.5px;top:786.7px;font-size:11.5px;line-height:15px;color:#555;font-weight:normal;"><b style="color:#333;-webkit-text-stroke:0">3/31/2020 16:15:26</b> GMT-07:00 (PDT)</div>
<div class="t" style="left:1140.5px;top:805.1px;font-size:11.5px;line-height:15px;color:#555;font-weight:normal;">Read Bandwidth:</div>
<div class="t" style="left:1290.0px;top:805.1px;font-size:11.5px;line-height:15px;color:#555;font-weight:normal;transform:translateX(-50%);">0</div>
<div style="position:absolute;left:1324.1px;top:811.0px;width:8.2px;height:2.8px;background:#3a9fea;"></div>
<div class="t" style="left:1140.5px;top:820.5px;font-size:11.5px;line-height:15px;color:#555;font-weight:normal;">Write Bandwidth:</div>
<div class="t" style="left:1290.0px;top:820.5px;font-size:11.5px;line-height:15px;color:#555;font-weight:normal;transform:translateX(-50%);">0</div>
<div style="position:absolute;left:1324.1px;top:826.3px;width:8.2px;height:2.8px;background:#f2915d;"></div>
<div style="position:absolute;left:1917px;top:0;width:3px;height:968px;background:#cfcfcf;"></div>
<div style="position:absolute;left:0;top:964px;width:1920px;height:4px;background:#bdbdbd;"></div>
<div style="position:absolute;left:0;top:964px;width:205px;height:4px;background:#222;"></div>
</div></body></html>
